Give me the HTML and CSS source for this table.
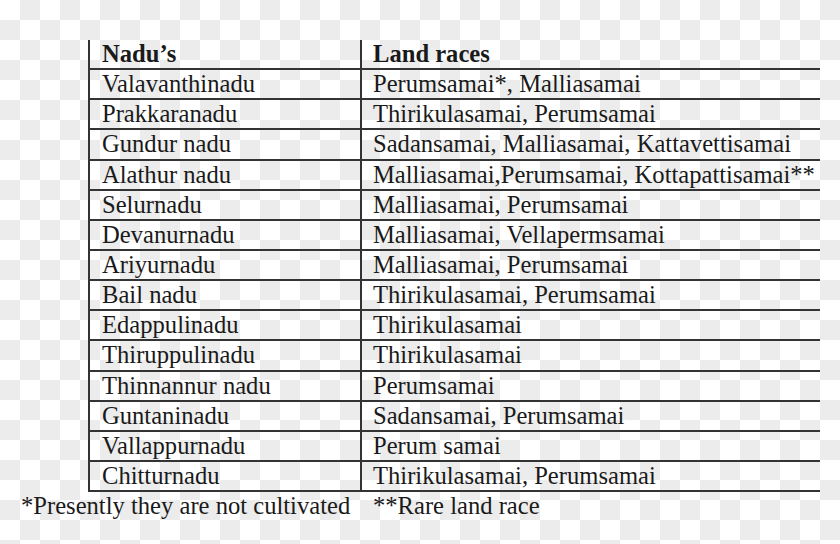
FILE: index.html
```html
<!DOCTYPE html>
<html lang="en">
<head>
<meta charset="utf-8">
<title>Nadu land races</title>
<link rel="stylesheet" href="styles.css">
</head>
<body>
<div class="page">
  <div class="table">
    <div class="row head"><div class="cell c1">Nadu’s</div><div class="cell c2">Land races</div></div>
    <div class="row"><div class="cell c1">Valavanthinadu</div><div class="cell c2">Perumsamai*, Malliasamai</div></div>
    <div class="row"><div class="cell c1">Prakkaranadu</div><div class="cell c2">Thirikulasamai, Perumsamai</div></div>
    <div class="row"><div class="cell c1">Gundur nadu</div><div class="cell c2">Sadansamai, Malliasamai, Kattavettisamai</div></div>
    <div class="row"><div class="cell c1">Alathur nadu</div><div class="cell c2">Malliasamai,Perumsamai, Kottapattisamai**</div></div>
    <div class="row"><div class="cell c1">Selurnadu</div><div class="cell c2">Malliasamai, Perumsamai</div></div>
    <div class="row"><div class="cell c1">Devanurnadu</div><div class="cell c2">Malliasamai, Vellapermsamai</div></div>
    <div class="row"><div class="cell c1">Ariyurnadu</div><div class="cell c2">Malliasamai, Perumsamai</div></div>
    <div class="row"><div class="cell c1">Bail nadu</div><div class="cell c2">Thirikulasamai, Perumsamai</div></div>
    <div class="row"><div class="cell c1">Edappulinadu</div><div class="cell c2">Thirikulasamai</div></div>
    <div class="row"><div class="cell c1">Thiruppulinadu</div><div class="cell c2">Thirikulasamai</div></div>
    <div class="row"><div class="cell c1">Thinnannur nadu</div><div class="cell c2">Perumsamai</div></div>
    <div class="row"><div class="cell c1">Guntaninadu</div><div class="cell c2">Sadansamai, Perumsamai</div></div>
    <div class="row"><div class="cell c1">Vallappurnadu</div><div class="cell c2">Perum samai</div></div>
    <div class="row"><div class="cell c1">Chitturnadu</div><div class="cell c2">Thirikulasamai, Perumsamai</div></div>
  </div>
  <div class="notes">
    <span class="note1">*Presently they are not cultivated</span>
    <span class="note2">**Rare land race</span>
  </div>
</div>
</body>
</html>
```

FILE: styles.css
```css
html, body {
  margin: 0;
  padding: 0;
}
body {
  width: 840px;
  height: 544px;
  overflow: hidden;
  background-color: #fff;
  background-image: conic-gradient(#ececec 25%, #fff 0 50%, #ececec 0 75%, #fff 0);
  background-size: 40px 40px;
  font-family: "Liberation Serif", "Times New Roman", serif;
  font-size: 24.6px;
  line-height: 28px;
  color: #1a1a1a;
}
.page {
  padding-top: 40px;
}
.table {
  margin-left: 88px;
  width: 732px;
}
.row {
  display: grid;
  grid-template-columns: 272px 1fr;
  height: 30.15px;
  box-sizing: border-box;
  border-bottom: 2px solid #333;
}
.head {
  font-weight: bold;
}
.cell {
  white-space: nowrap;
  border-left: 2px solid #333;
}
.c1 {
  padding-left: 12px;
}
.c2 {
  padding-left: 11px;
}
.notes {
  display: flex;
  padding-left: 21px;
  white-space: nowrap;
}
.note1 {
  width: 352px;
}
```
